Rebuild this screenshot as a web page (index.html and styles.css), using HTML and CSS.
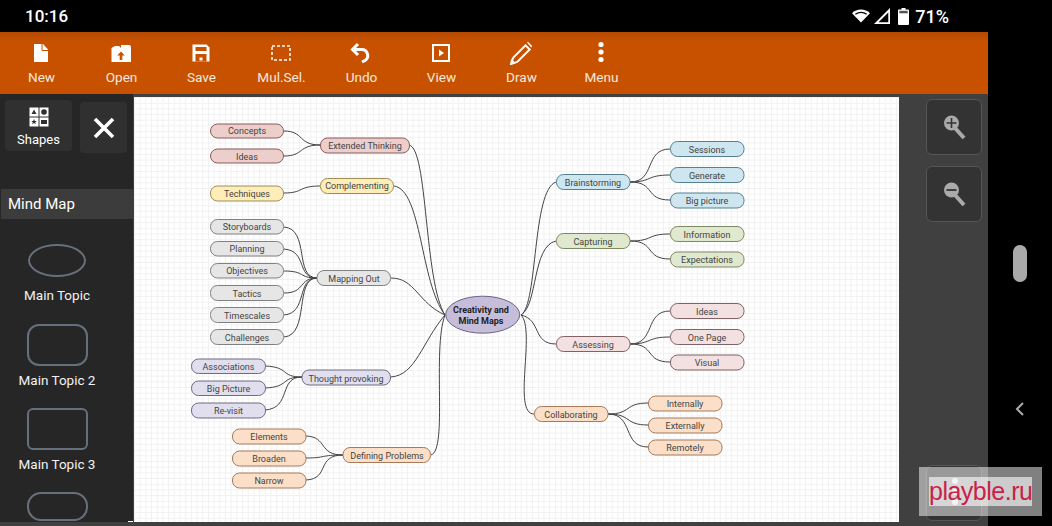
FILE: index.html
```html
<!DOCTYPE html>
<html lang="en">
<head>
    <meta charset="UTF-8">
    <meta name="viewport" content="width=device-width, initial-scale=1.0">
    <title>Mind Map</title>
    <link rel="stylesheet" href="styles.css">
</head>
<body>
    <div class="status-bar">
        <div class="time">10:16</div>
        <div class="status-icons">
            <svg class="wifi" width="18" height="14" viewBox="0 0 18 14"><path d="M0 4.2C2.4 1.8 5.5.6 9 .6s6.600 1.200 9 3.600L9 13.500z" fill="#fff"/><path d="M3.400 5.300C5 4 6.900 3.300 9 3.300s4 .7 5.600 2" fill="none" stroke="#000" stroke-width="1.200"/></svg>
            <svg class="signal" width="16" height="16" viewBox="0 0 16 16"><path d="M0 16 16 0v16zM4.500 14.300h9.800V4.500z" fill="#fff" fill-rule="evenodd"/></svg>
            <svg class="battery" width="11" height="17" viewBox="0 0 11 17"><path d="M3.500 0h4v1.500H10a1 1 0 0 1 1 1V16a1 1 0 0 1-1 1H1a1 1 0 0 1-1-1V2.500a1 1 0 0 1 1-1h2.500z" fill="#fff"/><rect x="1.300" y="2.800" width="8.400" height="2.500" fill="#555"/></svg>
            <div class="battery-text">71%</div>
        </div>
    </div>

    <div class="main">
        <div class="app">
            <div class="toolbar">
                <div class="tool">
                    <svg width="24" height="24" viewBox="0 0 24 24"><path d="M5 3h9l5 5.500V21H5z" fill="#fff"/><path d="M13 3v6.500h6" fill="none" stroke="#c85100" stroke-width="1"/></svg>
                    <span>New</span>
                </div>
                <div class="tool">
                    <svg width="24" height="24" viewBox="0 0 24 24"><path d="M2.500 7 6 5h4l2 2V4h8a2 2 0 0 1 2 2v15H2.500z" fill="#fff"/><path d="M12 10.500 8.200 14.500h2.500V19h2.600v-4.500h2.500z" fill="#c85100"/></svg>
                    <span>Open</span>
                </div>
                <div class="tool">
                    <svg width="24" height="24" viewBox="0 0 24 24"><path d="M3.500 3.500h14l3 3v14h-17z" fill="#fff"/><rect x="6.500" y="6" width="11" height="4" fill="#c85100"/><rect x="6.500" y="13" width="11" height="7.500" fill="#c85100"/><rect x="10.500" y="16.500" width="3" height="3" fill="#fff"/></svg>
                    <span>Save</span>
                </div>
                <div class="tool">
                    <svg width="24" height="24" viewBox="0 0 24 24"><rect x="3" y="5" width="18" height="14" fill="none" stroke="#fff" stroke-width="1.500" stroke-dasharray="3 2"/></svg>
                    <span>Mul.Sel.</span>
                </div>
                <div class="tool">
                    <svg width="24" height="24" viewBox="0 0 24 24"><path d="M9 3 3.500 8.500 9 14" fill="none" stroke="#fff" stroke-width="3"/><path d="M4 8.500h8.500a6 6 0 0 1 3.500 11l-3 1.500" fill="none" stroke="#fff" stroke-width="3"/></svg>
                    <span>Undo</span>
                </div>
                <div class="tool">
                    <svg width="24" height="24" viewBox="0 0 24 24"><rect x="4" y="4" width="16" height="16" fill="none" stroke="#fff" stroke-width="2"/><path d="M10 8.500v7l5-3.500z" fill="#fff"/></svg>
                    <span>View</span>
                </div>
                <div class="tool">
                    <svg width="24" height="24" viewBox="0 0 24 24"><path d="M2 23c.6-3 1.400-5.200 2.500-6.700L16.500 4.300l4.200 4.200L8.700 20.500C7 21.600 5 22.400 2 23z" fill="none" stroke="#fff" stroke-width="2"/><path d="M18 1.500l1-.7 4.200 4.200-1 1.500z" fill="#fff"/><path d="M2 23l1.200-4.500 3.300 3.300z" fill="#fff"/></svg>
                    <span>Draw</span>
                </div>
                <div class="tool">
                    <svg width="24" height="24" viewBox="0 0 24 24"><circle cx="12" cy="3.500" r="2.600" fill="#fff"/><circle cx="12" cy="11" r="2.600" fill="#fff"/><circle cx="12" cy="18.500" r="2.600" fill="#fff"/></svg>
                    <span>Menu</span>
                </div>
            </div>

            <div class="workspace">
                <div class="sidebar">
                    <div class="side-top">
                        <div class="shapes-btn">
                            <svg width="20" height="20" viewBox="0 0 20 20">
                                <rect x="0.500" y="0.500" width="9" height="9" fill="#fff"/>
                                <rect x="10.500" y="0.500" width="9" height="9" fill="#fff"/>
                                <rect x="0.500" y="10.500" width="9" height="9" fill="#fff"/>
                                <rect x="10.500" y="10.500" width="9" height="9" fill="#fff"/>
                                <path d="M5 2.500 7.500 7h-5z" fill="#2f2f2f"/>
                                <circle cx="15" cy="5" r="2.800" fill="#2f2f2f"/>
                                <path d="M5 12l.8 2h2l-1.600 1.300.6 2-1.800-1.200-1.800 1.200.6-2L2.200 14h2z" fill="#2f2f2f"/>
                                <rect x="12" y="13" width="6" height="4" fill="#2f2f2f"/>
                            </svg>
                            <span>Shapes</span>
                        </div>
                        <div class="close-btn">
                            <svg width="24" height="24" viewBox="0 0 24 24"><path d="M3 3 21 21M21 3 3 21" stroke="#fff" stroke-width="3.600" fill="none"/></svg>
                        </div>
                    </div>
                    <div class="side-title">Mind Map</div>
                    <div class="shape-list">
                        <div class="shape-item first-item">
                            <div class="shape shape-oval"></div>
                            <span>Main Topic</span>
                        </div>
                        <div class="shape-item">
                            <div class="shape shape-round"></div>
                            <span>Main Topic 2</span>
                        </div>
                        <div class="shape-item">
                            <div class="shape shape-rect"></div>
                            <span>Main Topic 3</span>
                        </div>
                        <div class="shape-item">
                            <div class="shape shape-pill"></div>
                        </div>
                    </div>
                </div>

                <div class="canvas">
                    <svg class="map" width="765" height="425" viewBox="134 97 765 425">
                        <g class="links">
                            <path d="M284 131C304 131 298 145 320 145"/>
                            <path d="M284 156C304 156 298 145 320 145"/>
                            <path d="M284 193C304 193 298 186 320 186"/>
                            <path d="M284 227C310 229 294 278 317 278"/>
                            <path d="M284 249C308 251 296 278 317 278"/>
                            <path d="M284 271C306 271 298 278 317 278"/>
                            <path d="M284 293C306 293 298 278 317 278"/>
                            <path d="M284 315C308 313 296 278 317 278"/>
                            <path d="M284 337C310 335 294 278 317 278"/>
                            <path d="M265 366C290 367 280 377 302 377"/>
                            <path d="M265 388C290 387 280 377 302 377"/>
                            <path d="M265 410C292 408 278 377 302 377"/>
                            <path d="M306 436C328 437 318 455 343 455"/>
                            <path d="M306 458C326 458 320 455 343 455"/>
                            <path d="M306 480C330 479 316 455 343 455"/>

                            <path d="M409 145C428 148 424 282 445 315"/>
                            <path d="M394 186C422 190 420 282 445 315"/>
                            <path d="M391 278C415 278 418 303 445 315"/>
                            <path d="M391 377C416 375 422 342 445 315"/>
                            <path d="M431 455C448 450 432 350 445 315"/>

                            <path d="M521 315C538 305 532 190 556 182"/>
                            <path d="M521 315C538 305 532 246 556 241"/>
                            <path d="M521 315C542 320 532 344 556 344"/>
                            <path d="M521 315C536 330 512 414 534 414"/>

                            <path d="M630 182C656 182 644 149 670 149"/>
                            <path d="M630 182C652 182 646 175 670 175"/>
                            <path d="M630 182C656 182 644 200 670 200"/>
                            <path d="M630 241C654 241 646 234 670 234"/>
                            <path d="M630 241C656 241 644 259 670 259"/>
                            <path d="M630 344C656 344 644 311 670 311"/>
                            <path d="M630 344C652 344 646 337 670 337"/>
                            <path d="M630 344C656 344 644 362 670 362"/>
                            <path d="M608 414C632 414 624 403 648 403"/>
                            <path d="M608 414C632 414 624 425 648 425"/>
                            <path d="M608 414C634 414 622 447 648 447"/>
                        </g>
                        <g class="node red">
                            <rect x="210.500" y="124" width="73" height="14" rx="7"/><text x="247" y="134">Concepts</text>
                            <rect x="210.500" y="149" width="73" height="14" rx="7"/><text x="247" y="160">Ideas</text>
                            <rect x="320.500" y="138" width="89" height="15" rx="7"/><text x="365" y="149">Extended Thinking</text>
                        </g>
                        <g class="node yellow">
                            <rect x="210.500" y="186" width="73" height="15" rx="7"/><text x="247" y="197">Techniques</text>
                            <rect x="320.500" y="178.500" width="73" height="15" rx="7"/><text x="357" y="189">Complementing</text>
                        </g>
                        <g class="node gray">
                            <rect x="210.500" y="219.500" width="73" height="14.500" rx="7"/><text x="247" y="230">Storyboards</text>
                            <rect x="210.500" y="241.500" width="73" height="14.500" rx="7"/><text x="247" y="252">Planning</text>
                            <rect x="210.500" y="263.500" width="73" height="14.500" rx="7"/><text x="247" y="274">Objectives</text>
                            <rect x="210.500" y="285.500" width="73" height="15" rx="7"/><text x="247" y="296.500">Tactics</text>
                            <rect x="210.500" y="307.500" width="73" height="15" rx="7"/><text x="247" y="318.500">Timescales</text>
                            <rect x="210.500" y="329.500" width="73" height="15" rx="7"/><text x="247" y="340.500">Challenges</text>
                            <rect x="317" y="270.500" width="73.500" height="15" rx="7"/><text x="354" y="281.500">Mapping Out</text>
                        </g>
                        <g class="node purple">
                            <rect x="191.500" y="359" width="74" height="14.500" rx="7"/><text x="228.500" y="370">Associations</text>
                            <rect x="191.500" y="381" width="74" height="14.500" rx="7"/><text x="228.500" y="392">Big Picture</text>
                            <rect x="191.500" y="403" width="74" height="15" rx="7"/><text x="228.500" y="414">Re-visit</text>
                            <rect x="302" y="370" width="88.500" height="15" rx="7"/><text x="346" y="381.500">Thought provoking</text>
                        </g>
                        <g class="node orange">
                            <rect x="232.500" y="429" width="73.500" height="15" rx="7"/><text x="269" y="440">Elements</text>
                            <rect x="232.500" y="451" width="73.500" height="15" rx="7"/><text x="269" y="462">Broaden</text>
                            <rect x="232.500" y="473" width="73.500" height="15" rx="7"/><text x="269" y="484">Narrow</text>
                            <rect x="343" y="447.500" width="87.500" height="15" rx="7"/><text x="387" y="458.500">Defining Problems</text>
                            <rect x="534.500" y="406.500" width="73.500" height="15" rx="7"/><text x="571" y="417.500">Collaborating</text>
                            <rect x="648.500" y="396" width="73.500" height="15" rx="7"/><text x="685" y="407">Internally</text>
                            <rect x="648.500" y="418" width="73.500" height="15" rx="7"/><text x="685" y="429">Externally</text>
                            <rect x="648.500" y="440" width="73.500" height="15" rx="7"/><text x="685" y="451">Remotely</text>
                        </g>
                        <g class="node blue">
                            <rect x="556.500" y="174.500" width="73.500" height="15" rx="7"/><text x="593" y="186">Brainstorming</text>
                            <rect x="670.500" y="141.500" width="73.500" height="15" rx="7"/><text x="707" y="152.500">Sessions</text>
                            <rect x="670.500" y="167.500" width="73.500" height="15" rx="7"/><text x="707" y="178.500">Generate</text>
                            <rect x="670.500" y="193" width="73.500" height="15" rx="7"/><text x="707" y="204">Big picture</text>
                        </g>
                        <g class="node green">
                            <rect x="556.500" y="233.500" width="73.500" height="15" rx="7"/><text x="593" y="245">Capturing</text>
                            <rect x="670.500" y="226.500" width="73.500" height="15" rx="7"/><text x="707" y="238">Information</text>
                            <rect x="670.500" y="252" width="73.500" height="15" rx="7"/><text x="707" y="263">Expectations</text>
                        </g>
                        <g class="node pink">
                            <rect x="556.500" y="336.500" width="73.500" height="15" rx="7"/><text x="593" y="348">Assessing</text>
                            <rect x="670.500" y="303.500" width="73.500" height="15" rx="7"/><text x="707" y="315">Ideas</text>
                            <rect x="670.500" y="329.500" width="73.500" height="15" rx="7"/><text x="707" y="341">One Page</text>
                            <rect x="670.500" y="355" width="73.500" height="15" rx="7"/><text x="707" y="366">Visual</text>
                        </g>
                        <g class="node center">
                            <ellipse cx="482.700" cy="314.700" rx="37" ry="18.500"/>
                            <text x="481" y="313">Creativity and</text>
                            <text x="481" y="324">Mind Maps</text>
                        </g>
                    </svg>
                </div>

                <div class="zoom-panel">
                    <div class="zoom-btn">
                        <svg width="26" height="26" viewBox="0 0 26 26"><path d="M13 14 22 24" stroke="#aaa" stroke-width="4"/><circle cx="9.500" cy="9" r="7.500" fill="#aaa"/><path d="M4.500 9h10M9.500 4v10" stroke="#333" stroke-width="1.600"/></svg>
                    </div>
                    <div class="zoom-btn">
                        <svg width="26" height="26" viewBox="0 0 26 26"><path d="M13 14 22 24" stroke="#aaa" stroke-width="4"/><circle cx="9.500" cy="9" r="7.500" fill="#aaa"/><path d="M4.500 9h10" stroke="#333" stroke-width="1.800"/></svg>
                    </div>
                    <div class="zoom-btn menu-btn">
                        <i></i><i></i><i></i>
                    </div>
                </div>
            </div>
        </div>

        <div class="nav-bar">
            <div class="handle"></div>
            <svg class="back" width="10" height="14" viewBox="0 0 10 14"><path d="M8 1 2 7l6 6" fill="none" stroke="#aaa" stroke-width="2"/></svg>
        </div>
    </div>

    <div class="watermark"><span>playble.ru</span></div>
</body>
</html>
```

FILE: styles.css
```css
html, body {
    margin: 0;
    padding: 0;
}
body {
    width: 1052px;
    height: 526px;
    overflow: hidden;
    background-color: #000;
    font-family: Roboto, "Liberation Sans", sans-serif;
    color: #fff;
}
.status-bar {
    height: 32px;
    display: flex;
    justify-content: space-between;
    align-items: center;
    padding: 0 103px 0 25px;
}
.time {
    font-size: 17px;
    font-weight: 500;
}
.status-icons {
    display: flex;
    align-items: center;
    gap: 4px;
}
.signal {
    margin-right: 4px;
}
.battery-text {
    margin-left: 2px;
    font-size: 18px;
    font-weight: 500;
}
.main {
    display: flex;
    height: 494px;
}
.app {
    width: 988px;
    display: flex;
    flex-direction: column;
}
.toolbar {
    height: 62px;
    flex: none;
    display: flex;
    padding-left: 1px;
    box-sizing: border-box;
    background: linear-gradient(#b54a00, #c85100 10px);
}
.tool {
    width: 80px;
    display: flex;
    flex-direction: column;
    align-items: center;
    padding-top: 9px;
    box-sizing: border-box;
    font-size: 13.600px;
    color: #f6e9df;
}
.tool span {
    margin: 4px 0 0 1px;
}
.workspace {
    flex: 1;
    display: flex;
    min-height: 0;
    background-color: #404040;
}
.sidebar {
    position: relative;
    width: 133px;
    height: 428px;
    flex: none;
    overflow: hidden;
    margin-right: 1px;
    background-color: #262626;
}
.sidebar::after {
    content: "";
    position: absolute;
    right: 0;
    bottom: 0;
    width: 5px;
    height: 1px;
    background-color: #fff;
}
.side-top {
    display: flex;
    align-items: flex-start;
    padding: 6px 0 0 5px;
}
.shapes-btn {
    width: 67px;
    height: 51px;
    display: flex;
    flex-direction: column;
    align-items: center;
    padding-top: 7px;
    box-sizing: border-box;
    background-color: #303030;
    border-radius: 4px;
    font-size: 13px;
}
.shapes-btn span {
    margin-top: 5px;
}
.close-btn {
    width: 47px;
    height: 51px;
    margin: 2px 0 0 8px;
    display: flex;
    align-items: center;
    justify-content: center;
    background-color: #303030;
    border-radius: 4px;
}
.side-title {
    height: 30px;
    margin: 36px 0 0 1px;
    padding-left: 7px;
    line-height: 30px;
    font-size: 15px;
    background-color: #3c3c3c;
}
.shape-list {
    width: 114px;
    display: flex;
    flex-direction: column;
    padding-top: 25px;
}
.shape-item {
    height: 84px;
    flex: none;
    display: flex;
    flex-direction: column;
    align-items: center;
    font-size: 13.500px;
    color: #f2f2f2;
}
.first-item {
    height: 80px;
}
.shape {
    width: 58px;
    box-sizing: border-box;
    border: 2px solid #66707c;
    flex: none;
}
.shape-oval {
    height: 33px;
    border-radius: 50%;
    margin-bottom: 10px;
}
.shape-round {
    width: 61px;
    height: 42px;
    border-radius: 12px;
    margin-bottom: 6px;
}
.shape-rect {
    width: 61px;
    height: 42px;
    border-radius: 6px;
    margin-bottom: 6px;
}
.shape-pill {
    width: 61px;
    height: 29px;
    border-radius: 14px;
}
.canvas {
    width: 765px;
    height: 425px;
    flex: none;
    margin-top: 3px;
    background-color: #fff;
    background-image:
        linear-gradient(#f1f1f1 1px, transparent 1px),
        linear-gradient(90deg, #f1f1f1 1px, transparent 1px);
    background-size: 5.700px 5.700px;
}
.map {
    display: block;
}
.links path {
    fill: none;
    stroke: #444;
    stroke-width: 1;
}
.node rect, .node ellipse {
    stroke-width: 1;
}
.node text {
    font-family: Roboto, "Liberation Sans", sans-serif;
    font-size: 9px;
    fill: #444;
    text-anchor: middle;
}
.red rect { fill: #eccfcb; stroke: #8a5a5a; }
.yellow rect { fill: #fdedb8; stroke: #a08c55; }
.gray rect { fill: #e6e6e6; stroke: #808080; }
.purple rect { fill: #e1dfee; stroke: #6f6a85; }
.orange rect { fill: #fbdfc8; stroke: #a67a5a; }
.blue rect { fill: #cde6f0; stroke: #55808f; }
.green rect { fill: #e0e8cf; stroke: #7c8a62; }
.pink rect { fill: #f3e1e2; stroke: #7f6265; }
.center ellipse { fill: #c5bdd9; stroke: #6a6385; }
.center text {
    font-weight: 700;
    fill: #222;
}
.zoom-panel {
    flex: 1;
    display: flex;
    flex-direction: column;
    padding: 5px 6px 0 27px;
}
.zoom-btn {
    width: 56px;
    height: 56px;
    flex: none;
    display: flex;
    align-items: center;
    justify-content: center;
    margin-bottom: 11px;
    padding-left: 2px;
    box-sizing: border-box;
    background-color: #333;
    border: 1px solid #565656;
    border-radius: 6px;
}
.menu-btn {
    flex-direction: column;
    gap: 4.500px;
    margin-top: 232px;
    padding: 0 0 3px 2px;
}
.menu-btn i {
    width: 6px;
    height: 6px;
    border-radius: 50%;
    background-color: #ccc;
}
.nav-bar {
    flex: 1;
    display: flex;
    flex-direction: column;
    align-items: center;
    padding-top: 213px;
}
.handle {
    width: 14px;
    height: 37px;
    border-radius: 7px;
    background-color: #aaa;
}
.back {
    margin-top: 120px;
}
.watermark {
    position: absolute;
    left: 919px;
    top: 467px;
    width: 123px;
    height: 49px;
    display: flex;
    align-items: center;
    justify-content: center;
    background-color: rgba(255, 255, 255, 0.5);
}
.watermark span {
    width: 103px;
    height: 29px;
    line-height: 28px;
    text-align: center;
    font-family: "Liberation Sans", Arial, sans-serif;
    font-size: 25px;
    letter-spacing: -0.500px;
    color: #c9214a;
    background-color: rgba(255, 255, 255, 0.6);
}
```
